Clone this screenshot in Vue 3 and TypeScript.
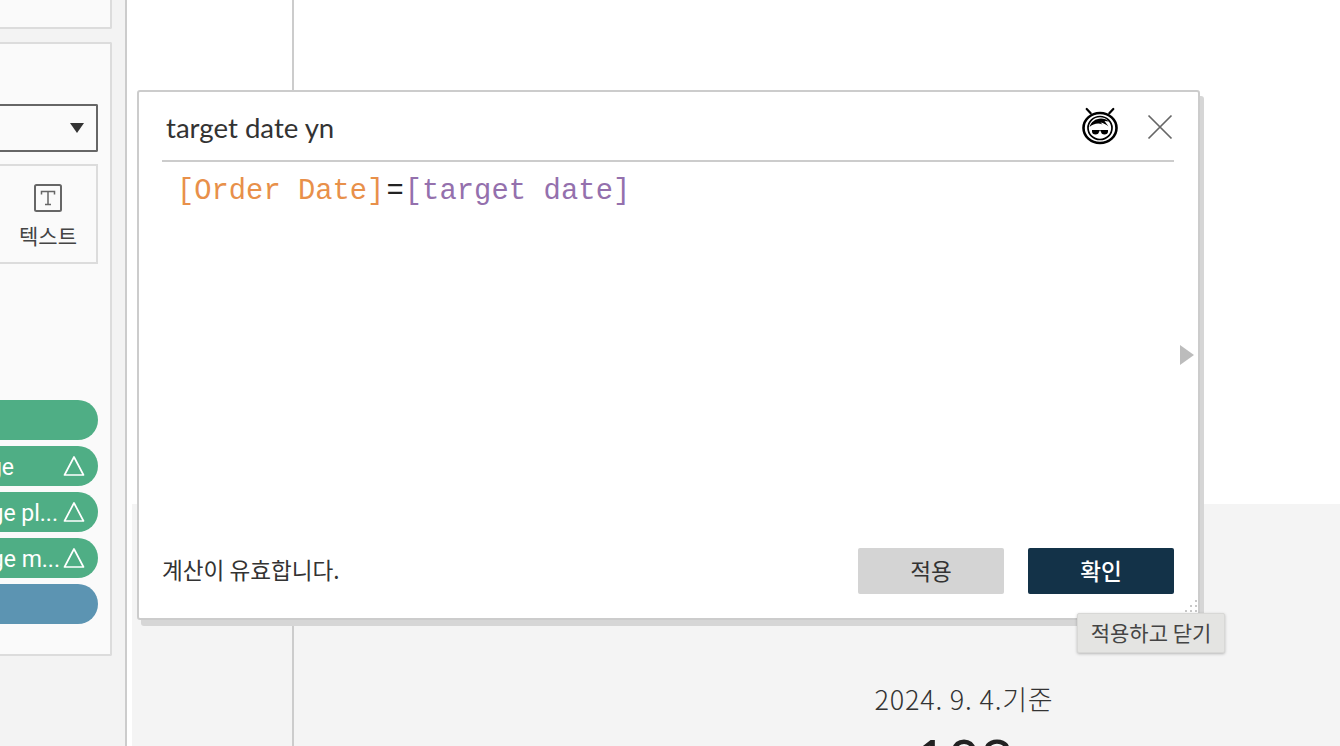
<script setup lang="ts">
const pills = [
  { label: '', tone: 'green', warn: false, cls: '' },
  { label: 'Average', tone: 'green', warn: true, cls: 'w1' },
  { label: 'Average pl...', tone: 'green', warn: true, cls: 'w2' },
  { label: 'Average m...', tone: 'green', warn: true, cls: 'w3' },
  { label: '', tone: 'blue', warn: false, cls: '' },
]
const dots = [[10, 0], [5, 5], [10, 5], [0, 10], [5, 10], [10, 10]]
</script>

<template>
  <div class="page">
    <aside class="side">
      <div class="card top-card"></div>
      <div class="card main-card">
        <div class="select"><span class="caret"></span></div>
        <div class="marks">
          <div class="mark">
            <svg class="t-icon" width="28" height="28" viewBox="0 0 28 28">
              <rect x="1" y="1" width="26" height="26" rx="1.5" fill="none" stroke="#666" stroke-width="2" />
              <path d="M7.500 10.500V7.500h13v3M14 7.500v13M11 20.500h6" fill="none" stroke="#666" stroke-width="1.500" />
            </svg>
            <span class="mark-label">텍스트</span>
          </div>
        </div>
        <div class="pills">
          <div v-for="(p, i) in pills" :key="i" class="pill" :class="p.tone">
            <span class="pill-label" :class="p.cls">{{ p.label }}</span>
            <svg v-if="p.warn" class="warn" width="22" height="22" viewBox="0 0 22 22">
              <path d="M11 2 20.500 20H1.500Z" fill="none" stroke="#fff" stroke-width="1.700" stroke-linejoin="round" />
            </svg>
          </div>
        </div>
      </div>
    </aside>
    <div class="rule"></div>
    <main class="canvas">
      <div class="upper"><div class="col-a"></div><div class="col-b"></div></div>
      <div class="lower">
        <div class="col-a"></div>
        <div class="col-b lower-b">
          <div class="asof">2024. 9. 4.기준</div>
          <div class="big">108</div>
        </div>
      </div>
    </main>

    <section class="dialog">
      <header class="head">
        <h1 class="title">target date yn</h1>
        <svg class="logo" width="38" height="38" viewBox="0 0 38 38">
          <path d="M9.700 6.300 5.700 2M28.300 6.300 32.300 2" stroke="#000" stroke-width="2.200" stroke-linecap="round" fill="none" />
          <ellipse cx="19" cy="21" rx="16.500" ry="15" fill="none" stroke="#000" stroke-width="2.600" />
          <ellipse cx="19" cy="21" rx="12" ry="11.500" fill="none" stroke="#000" stroke-width="1.700" />
          <path d="M8.500 20c1.500-5 6-8.500 11.500-8.500 3 0 6 1 8 3l-4.500-.5 4 5.500c-2.500-2-5-3.500-8-4l2 2c-4.500-2-9.500-.5-13 2.500Z" fill="#000" />
          <path d="M11 23h7v1.500c0 2-1.300 3-3.500 3S11 26.500 11 24.500ZM20 23h7v1.500c0 2-1.300 3-3.500 3S20 26.500 20 24.500ZM18 23.300h2v1h-2Z" fill="#000" />
        </svg>
        <svg class="close" width="26" height="26" viewBox="0 0 26 26">
          <path d="M1.500 1.500 24.500 24.500M24.500 1.500 1.500 24.500" stroke="#666" stroke-width="1.700" fill="none" />
        </svg>
      </header>
      <div class="code">
        <span class="c-field">[Order Date]</span><span class="c-op">=</span><span class="c-param">[target date]</span>
      </div>
      <footer class="foot">
        <span class="status">계산이 유효합니다.</span>
        <button class="btn apply">적용</button>
        <button class="btn ok">확인</button>
      </footer>
      <span class="side-arrow"></span>
      <svg class="grip" width="12" height="12" viewBox="0 0 12 12">
        <rect v-for="(d, i) in dots" :key="i" :x="d[0]" :y="d[1]" width="2" height="2" fill="#c8c8c8" />
      </svg>
    </section>
    <div class="tooltip">적용하고 닫기</div>
  </div>
</template>

<style scoped>
.page {
  position: relative;
  display: flex;
  width: 1340px;
  height: 746px;
  overflow: hidden;
  background: #fff;
  font-family: "Noto Sans CJK KR", "Noto Sans", sans-serif;
  color: #333;
}
.side {
  width: 125px;
  flex: none;
  background: #f3f3f3;
  display: flex;
  flex-direction: column;
  gap: 13px;
  margin-top: -21px;
  overflow: hidden;
}
.card {
  width: 112px;
  flex: none;
  background: #fafafa;
  border: 2px solid #dcdcdc;
  border-left: 0;
  box-sizing: border-box;
  border-radius: 0 2px 2px 0;
}
.top-card { height: 50px; }
.main-card {
  height: 614px;
  padding: 60px 12px 0 0;
  display: flex;
  flex-direction: column;
  align-items: stretch;
}
.select {
  height: 48px;
  box-sizing: border-box;
  border: 2px solid #666;
  border-left: 0;
  border-radius: 0 2px 2px 0;
  background: #fafafa;
  display: flex;
  align-items: center;
  justify-content: flex-end;
  padding-right: 12px;
}
.caret {
  width: 0;
  height: 0;
  border-left: 7px solid transparent;
  border-right: 7px solid transparent;
  border-top: 10px solid #333;
}
.marks {
  height: 100px;
  box-sizing: border-box;
  margin-top: 12px;
  border: 2px solid #dcdcdc;
  border-left: 0;
  padding-top: 18px;
}
.mark {
  width: 96px;
  display: flex;
  flex-direction: column;
  align-items: center;
  gap: 11px;
}
.t-icon { display: block; }
.mark-label {
  font-size: 21px;
  line-height: 24px;
  color: #444;
  white-space: nowrap;
}
.pills {
  margin-top: 136px;
  display: flex;
  flex-direction: column;
  gap: 6px;
}
.pill {
  height: 40px;
  margin-left: -120px;
  border-radius: 0 20px 20px 0;
  display: flex;
  align-items: center;
  justify-content: flex-end;
  padding-right: 13px;
  color: #fff;
  font-family: Roboto, "Noto Sans", sans-serif;
  font-size: 23px;
  white-space: nowrap;
}
.pill-label { padding-top: 2px; }
.green { background: #4fae85; }
.blue { background: #5c94b2; }
.w1 { margin-right: 49px; }
.w2 { margin-right: 5px; }
.w3 { margin-right: 3px; }
.warn { display: block; flex: none; }
.rule {
  width: 2px;
  flex: none;
  background: #ccc;
}
.canvas {
  flex: 1;
  min-width: 0;
  margin-left: 5px;
  display: flex;
  flex-direction: column;
}
.upper {
  height: 504px;
  flex: none;
  display: flex;
}
.lower {
  flex: 1;
  min-height: 0;
  display: flex;
  background: #f4f4f4;
  overflow: hidden;
}
.col-a {
  width: 162px;
  box-sizing: border-box;
  flex: none;
  border-right: 2px solid #ccc;
}
.col-b { flex: 1; min-width: 0; }
.lower-b {
  padding-top: 180px;
  padding-left: 294px;
  display: flex;
  flex-direction: column;
  align-items: center;
  overflow: hidden;
}
.asof {
  flex: none;
  font-size: 27px;
  line-height: 30px;
  letter-spacing: 0.8px;
  color: #333;
  white-space: nowrap;
  font-weight: 300;
}
.big {
  flex: none;
  font-family: "Noto Sans", sans-serif;
  font-size: 58px;
  line-height: 60px;
  margin-top: 16px;
  color: #222;
}
.dialog {
  position: absolute;
  left: 137px;
  top: 90px;
  width: 1063px;
  height: 530px;
  box-sizing: border-box;
  background: #fff;
  border: 2px solid #ccc;
  border-radius: 3px;
  box-shadow: 4px 6px 0 #d6d6d6;
  padding: 0 24px 0 23px;
  display: flex;
  flex-direction: column;
}
.head {
  height: 70px;
  flex: none;
  border-bottom: 2px solid #ccc;
  display: flex;
  align-items: center;
  box-sizing: border-box;
}
.title {
  margin: 0 auto 0 4px;
  font-family: Lato, sans-serif;
  font-size: 27.6px;
  font-weight: 400;
  color: #333;
  line-height: 34px;
  padding-top: 4px;
}
.logo { margin-right: 28px; margin-left: 1px; }
.close { margin-top: 2px; margin-right: 1px; }
.code {
  padding: 11px 0 0 15px;
  font-family: "Liberation Mono", monospace;
  font-size: 28.8px;
  line-height: 38px;
  flex: 1;
  white-space: nowrap;
}
.c-field { color: #e8904a; }
.c-op { color: #222; margin: 0 1px 0 2px; }
.c-param { color: #9470ad; letter-spacing: 0.08px; }
.foot {
  display: flex;
  align-items: center;
  padding-bottom: 24px;
}
.status {
  font-size: 22.6px;
  line-height: 44px;
  margin-bottom: 2px;
  margin-right: auto;
  color: #333;
}
.btn {
  width: 146px;
  height: 46px;
  border: 0;
  border-radius: 2px;
  font-family: "Noto Sans CJK KR", sans-serif;
  font-size: 22.6px;
  padding: 0 0 2px;
}
.apply { background: #d4d4d4; color: #333; margin-right: 24px; }
.ok { background: #133248; color: #fff; font-weight: 500; }
.side-arrow {
  position: absolute;
  right: 4px;
  top: 253px;
  width: 0;
  height: 0;
  border-top: 10px solid transparent;
  border-bottom: 10px solid transparent;
  border-left: 14px solid #bcbcbc;
}
.grip {
  position: absolute;
  right: 1px;
  bottom: 6px;
}
.tooltip {
  position: absolute;
  left: 1077px;
  top: 613px;
  width: 148px;
  height: 40px;
  box-sizing: border-box;
  background: #e4e4e2;
  border: 1px solid #d8d8d6;
  border-radius: 2px;
  box-shadow: 0 1px 3px rgba(0, 0, 0, 0.25);
  font-size: 21px;
  line-height: 36px;
  text-align: center;
  color: #444;
  white-space: nowrap;
}
</style>
<style>
html, body { margin: 0; background: #fff; }
</style>
